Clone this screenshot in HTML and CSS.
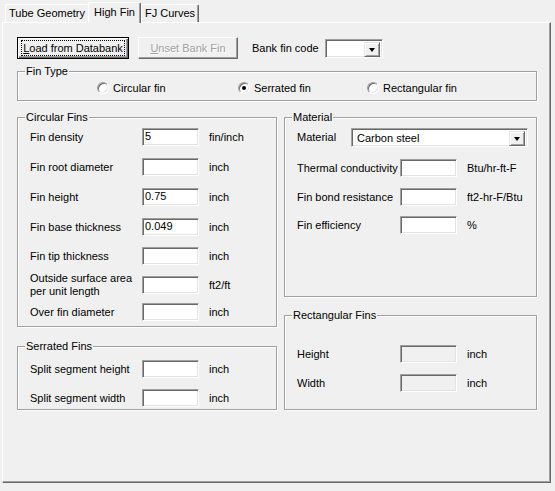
FILE: index.html
```html
<html>

<head>
    <title>High Fin</title>

    <link rel="stylesheet" href="styles.css">
</head>

<body>
    <div class="tabs">
        <div class="tab tab-first">Tube Geometry</div>
        <div class="tab tab-active">High Fin</div>
        <div class="tab tab-last">FJ Curves</div>
    </div>

    <div class="panel">
        <div class="toolbar">
            <button class="btn btn-default"><span class="focus"><u>L</u>oad from Databank</span></button>
            <button class="btn btn-disabled"><u>U</u>nset Bank Fin</button>
            <span class="toolbar-label">Bank fin code</span>
            <div class="combo combo-small">
                <span class="combo-value"></span>
                <span class="combo-btn"><span class="arrow"></span></span>
            </div>
        </div>

        <!-- Fin type -->
        <div class="group group-fintype">
            <span class="group-title">Fin Type</span>
            <label class="radio-item radio-circular"><span class="radio"></span>Circular fin</label>
            <label class="radio-item radio-serrated"><span class="radio checked"></span>Serrated fin</label>
            <label class="radio-item"><span class="radio"></span>Rectangular fin</label>
        </div>

        <div class="columns">
            <div class="col col-left">
                <div class="group group-circular">
                    <span class="group-title">Circular Fins</span>
                    <div class="field">
                        <span class="field-label">Fin density</span>
                        <span class="edit">5</span>
                        <span class="unit">fin/inch</span>
                    </div>
                    <div class="field">
                        <span class="field-label">Fin root diameter</span>
                        <span class="edit"></span>
                        <span class="unit">inch</span>
                    </div>
                    <div class="field">
                        <span class="field-label">Fin height</span>
                        <span class="edit">0.75</span>
                        <span class="unit">inch</span>
                    </div>
                    <div class="field tight">
                        <span class="field-label">Fin base thickness</span>
                        <span class="edit">0.049</span>
                        <span class="unit">inch</span>
                    </div>
                    <div class="field tight">
                        <span class="field-label">Fin tip thickness</span>
                        <span class="edit"></span>
                        <span class="unit">inch</span>
                    </div>
                    <div class="field tighter">
                        <span class="field-label two-line">Outside surface area<br>per unit length</span>
                        <span class="edit"></span>
                        <span class="unit">ft2/ft</span>
                    </div>
                    <div class="field">
                        <span class="field-label">Over fin diameter</span>
                        <span class="edit"></span>
                        <span class="unit">inch</span>
                    </div>
                </div>

                <div class="group group-serrated">
                    <span class="group-title">Serrated Fins</span>
                    <div class="field tight">
                        <span class="field-label">Split segment height</span>
                        <span class="edit"></span>
                        <span class="unit">inch</span>
                    </div>
                    <div class="field">
                        <span class="field-label">Split segment width</span>
                        <span class="edit"></span>
                        <span class="unit">inch</span>
                    </div>
                </div>
            </div>

            <div class="col col-right">
                <div class="group group-material">
                    <span class="group-title">Material</span>
                    <div class="field combo-row">
                        <span class="field-label">Material</span>
                        <div class="combo combo-wide">
                            <span class="combo-value">Carbon steel</span>
                            <span class="combo-btn"><span class="arrow"></span></span>
                        </div>
                    </div>
                    <div class="field tight">
                        <span class="field-label">Thermal conductivity</span>
                        <span class="edit"></span>
                        <span class="unit">Btu/hr-ft-F</span>
                    </div>
                    <div class="field tighter">
                        <span class="field-label">Fin bond resistance</span>
                        <span class="edit"></span>
                        <span class="unit">ft2-hr-F/Btu</span>
                    </div>
                    <div class="field">
                        <span class="field-label">Fin efficiency</span>
                        <span class="edit"></span>
                        <span class="unit">%</span>
                    </div>
                </div>

                <div class="group group-rect">
                    <span class="group-title">Rectangular Fins</span>
                    <div class="field tight">
                        <span class="field-label">Height</span>
                        <span class="edit disabled"></span>
                        <span class="unit">inch</span>
                    </div>
                    <div class="field">
                        <span class="field-label">Width</span>
                        <span class="edit disabled"></span>
                        <span class="unit">inch</span>
                    </div>
                </div>
            </div>
        </div>
    </div>
</body>

</html>
```

FILE: styles.css
```css
body {
    margin: 0;
    background-color: #f0f0f0;
    color: #000;
    font-family: "Liberation Sans", Arial, sans-serif;
    font-size: 11px;
}

/* tab strip */
.tabs {
    display: flex;
    align-items: flex-end;
    height: 22px;
    padding-left: 5px;
    position: relative;
    z-index: 1;
}

.tab {
    box-sizing: border-box;
    height: 18px;
    line-height: 16px;
    text-align: center;
    background-color: #f0f0f0;
    border-top: 1px solid #fff;
    border-left: 1px solid #fff;
    border-right: 1px solid #696969;
    box-shadow: inset -1px 0 0 #a0a0a0;
    border-radius: 2px 2px 0 0;
}

.tab-first {
    width: 83px;
    border-right: none;
    box-shadow: none;
}

.tab-active {
    width: 53px;
    height: 21px;
    line-height: 18px;
    margin-bottom: -1px;
}

.tab-last {
    width: 58px;
}

/* page */
.panel {
    box-sizing: border-box;
    width: 549px;
    height: 461px;
    margin-left: 2px;
    padding: 14px 0 0 14px;
    border-top: 1px solid #fff;
    border-left: 1px solid #fff;
    border-right: 1px solid #696969;
    border-bottom: 1px solid #696969;
    box-shadow: inset -1px -1px 0 #a0a0a0;
}

.toolbar {
    display: flex;
    align-items: center;
    height: 22px;
}

.btn {
    box-sizing: border-box;
    height: 22px;
    padding: 0;
    font: inherit;
    color: #000;
    background-color: #f0f0f0;
    border-top: 1px solid #fff;
    border-left: 1px solid #fff;
    border-right: 1px solid #696969;
    border-bottom: 1px solid #696969;
    box-shadow: inset -1px -1px 0 #a0a0a0;
}

.btn-default {
    width: 112px;
    border: 1px solid #000;
    box-shadow: inset 1px 1px 0 #fff, inset -1px -1px 0 #696969, inset -2px -2px 0 #a0a0a0;
}

.btn-default .focus {
    display: block;
    margin: 0 3px 1px 3px;
    border: 1px dotted #000;
    line-height: 14px;
}

.btn-disabled {
    width: 100px;
    margin-left: 9px;
    color: #a0a0a0;
    text-shadow: 1px 1px 0 #fff;
}

.toolbar-label {
    width: 73px;
    margin-left: 14px;
}

/* combo box */
.combo {
    box-sizing: border-box;
    display: flex;
    height: 19px;
    background-color: #fff;
    border-top: 1px solid #a0a0a0;
    border-left: 1px solid #a0a0a0;
    border-right: 1px solid #fff;
    border-bottom: 1px solid #fff;
    box-shadow: inset 1px 1px 0 #696969, inset -1px -1px 0 #e3e3e3;
    padding: 2px 2px 2px 2px;
}

.combo-small {
    width: 58px;
}

.combo-wide {
    width: 177px;
}

.combo-value {
    flex: 1;
    padding-left: 3px;
    line-height: 15px;
}

.combo-btn {
    box-sizing: border-box;
    width: 16px;
    height: 15px;
    display: flex;
    align-items: center;
    justify-content: center;
    background-color: #f0f0f0;
    border-top: 1px solid #e3e3e3;
    border-left: 1px solid #e3e3e3;
    border-right: 1px solid #696969;
    border-bottom: 1px solid #696969;
    box-shadow: inset 1px 1px 0 #fff, inset -1px -1px 0 #a0a0a0;
}

.arrow {
    width: 0;
    height: 0;
    margin-top: 1px;
    border-left: 3.5px solid transparent;
    border-right: 3.5px solid transparent;
    border-top: 4px solid #000;
}

/* group boxes */
.group {
    box-sizing: border-box;
    position: relative;
    border: 1px solid #a0a0a0;
    box-shadow: inset 1px 1px 0 #fff, 1px 1px 0 #fff;
}

.group-title {
    position: absolute;
    top: -7px;
    left: 7px;
    padding: 0 1px;
    line-height: 13px;
    background-color: #f0f0f0;
}

.group-fintype {
    display: flex;
    width: 520px;
    height: 30px;
    margin-top: 12px;
    padding: 10px 0 0 79px;
}

.radio-item {
    display: flex;
    align-items: center;
    height: 12px;
}

.radio-circular {
    width: 141px;
}

.radio-serrated {
    width: 129px;
}

.radio {
    box-sizing: border-box;
    position: relative;
    width: 12px;
    height: 12px;
    margin-right: 4px;
    border-radius: 50%;
    background-color: #fff;
    border: 1px solid;
    border-color: #a0a0a0 #fff #fff #a0a0a0;
    box-shadow: inset 1px 1px 0 #696969, inset -1px -1px 0 #e3e3e3;
}

.radio.checked::after {
    content: "";
    position: absolute;
    left: 3px;
    top: 3px;
    width: 4px;
    height: 4px;
    border-radius: 50%;
    background-color: #000;
}

.columns {
    display: flex;
    margin-top: 16px;
}

.col-left {
    width: 260px;
}

.col-right {
    width: 253px;
    margin-left: 7px;
}

.group-circular {
    height: 210px;
    padding: 10px 0 0 12px;
}

.group-serrated {
    height: 64px;
    margin-top: 19px;
    padding: 13px 0 0 12px;
}

.group-material {
    height: 180px;
    padding: 10px 0 0 12px;
}

.group-rect {
    height: 95px;
    margin-top: 18px;
    padding: 29px 0 0 12px;
}

/* field rows */
.field {
    display: flex;
    align-items: flex-start;
    height: 18px;
    margin-bottom: 12px;
}

.field.tight {
    margin-bottom: 11px;
}

.field.tighter {
    margin-bottom: 9px;
}

.group-material .field.tighter {
    margin-bottom: 10px;
}

.field-label {
    width: 112px;
    line-height: 18px;
    white-space: nowrap;
}

.field-label.two-line {
    line-height: 13px;
    margin-top: -4px;
}

.group-material .field-label,
.group-rect .field-label {
    width: 103px;
}

.combo-row {
    height: 19px;
}

.combo-row .field-label {
    width: 54px;
    line-height: 19px;
}

.edit {
    box-sizing: border-box;
    width: 57px;
    height: 18px;
    padding: 0 2px;
    line-height: 14px;
    background-color: #fff;
    border-top: 1px solid #a0a0a0;
    border-left: 1px solid #a0a0a0;
    border-right: 1px solid #fff;
    border-bottom: 1px solid #fff;
    box-shadow: inset 1px 1px 0 #696969, inset -1px -1px 0 #e3e3e3;
}

.edit.disabled {
    background-color: #f0f0f0;
}

.unit {
    margin-left: 10px;
    line-height: 18px;
}
```
